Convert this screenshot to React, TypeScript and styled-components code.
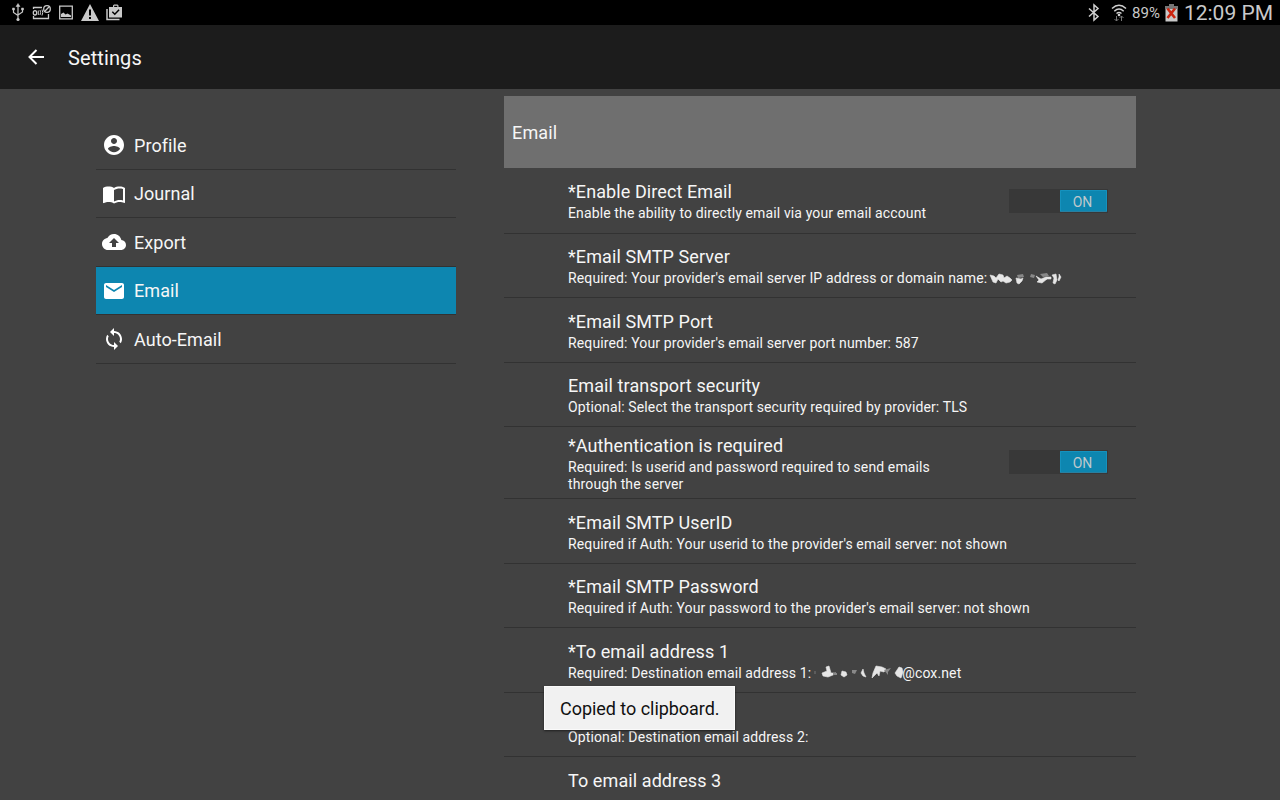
import React from 'react';
import styled, { createGlobalStyle } from 'styled-components';

const GlobalStyle = createGlobalStyle`
  * { box-sizing: border-box; }
  body { margin: 0; background: #424242; overflow: hidden; font-family: Roboto, sans-serif; color: #f6f6f6; }
  svg { display: block; flex: none; overflow: visible; }
`;

const Screen = styled.div`
  width: 1280px;
  height: 800px;
  overflow: hidden;
  position: relative;
  display: flex;
  flex-direction: column;
`;

const StatusBar = styled.header`
  height: 25px;
  flex: none;
  background: #000;
  color: #c9c9c9;
  display: flex;
  align-items: center;
  justify-content: space-between;
  padding: 0 7px 0 11px;
`;

const StatusIcons = styled.div`
  display: flex;
  align-items: center;
`;

const StatusIcon = styled.div<{ $left: number }>`
  margin-left: ${p => p.$left}px;
`;

const StatusText = styled.span<{ $size: number; $left: number }>`
  font-size: ${p => p.$size}px;
  line-height: 26px;
  padding-top: 1px;
  margin-left: ${p => p.$left}px;
`;

const ActionBar = styled.div`
  height: 64px;
  flex: none;
  background: #1c1c1c;
  display: flex;
  align-items: center;
  padding-left: 28px;
  gap: 24px;
`;

const Heading = styled.h1`
  margin: 0;
  padding-top: 2px;
  font-size: 20px;
  font-weight: 400;
  line-height: 24px;
  letter-spacing: 0.1px;
`;

const Body = styled.main`
  flex: 1;
  min-height: 0;
  display: flex;
  align-items: flex-start;
  gap: 48px;
  padding-left: 96px;
`;

const Nav = styled.nav`
  width: 360px;
  padding-top: 32px;
`;

const NavItem = styled.div<{ $active?: boolean }>`
  height: 48.5px;
  display: flex;
  align-items: center;
  gap: 8px;
  padding: 1px 0 0 6px;
  font-size: 18px;
  letter-spacing: 0.06px;
  background: ${p => (p.$active ? '#0d86b0' : 'transparent')};
  border-bottom: 1px solid #323232;
`;

const Panel = styled.section`
  width: 632px;
  padding-top: 7px;
`;

const PanelTitle = styled.h2`
  margin: 0;
  height: 72px;
  background: #6f6f6f;
  padding: 1px 8px 0;
  font-size: 18px;
  font-weight: 400;
  letter-spacing: 0.15px;
  line-height: 72px;
`;

const Row = styled.div<{ $height?: number }>`
  height: ${p => p.$height ?? 64.5}px;
  display: flex;
  align-items: center;
  justify-content: space-between;
  padding: 0 28px 0 64px;
  border-bottom: 1px solid #323232;
`;

const RowTitle = styled.div`
  height: 26px;
  font-size: 18px;
  line-height: 26px;
  letter-spacing: 0.09px;
  white-space: nowrap;
`;

const Summary = styled.div`
  min-height: 16.4px;
  font-size: 14px;
  line-height: 16.4px;
  letter-spacing: 0.125px;
  white-space: pre;
  display: flex;
`;

const Track = styled.div<{ $raised?: boolean }>`
  width: 99px;
  height: 24px;
  margin-bottom: ${p => (p.$raised ? 2 : 0)}px;
  background: #383838;
  display: flex;
  justify-content: flex-end;
  padding: 1px;
`;

const Thumb = styled.div`
  width: 47px;
  height: 22px;
  background: #0d86b0;
  border: 1px solid #1592be;
  border-bottom-color: #2a7fa0;
  border-radius: 1px;
  color: #bfc8cc;
  font-size: 14px;
  line-height: 22px;
  padding-right: 2px;
  text-align: center;
`;

const Toast = styled.div`
  position: absolute;
  left: 544px;
  top: 686px;
  width: 191px;
  height: 44px;
  background: #f1f1f1;
  border: 1px solid #fafafa;
  box-shadow: 0 1px 2px #202020;
  color: #111;
  font-size: 18px;
  letter-spacing: -0.04px;
  line-height: 43px;
  padding-left: 15px;
`;

const navPaths = {
  profile: 'M12 2C6.48 2 2 6.48 2 12s4.480 10 10 10 10-4.480 10-10S17.520 2 12 2zm0 3c1.660 0 3 1.340 3 3s-1.340 3-3 3-3-1.340-3-3 1.340-3 3-3zm0 14.200c-2.500 0-4.710-1.280-6-3.220.030-1.990 4-3.080 6-3.080 1.990 0 5.970 1.090 6 3.080-1.290 1.940-3.500 3.220-6 3.220z',
  journal: 'M21 5c-1.110-.350-2.330-.500-3.500-.500-1.950 0-4.050.400-5.500 1.500-1.450-1.100-3.550-1.500-5.500-1.500S2.450 4.900 1 6v14.650c0 .250.250.500.500.500.100 0 .150-.050.250-.050C3.100 20.450 5.050 20 6.500 20c1.950 0 4.050.400 5.500 1.500 1.350-.850 3.800-1.500 5.500-1.500 1.650 0 3.350.300 4.750 1.050.100.050.150.050.250.050.250 0 .500-.250.500-.500V6c-.600-.450-1.250-.750-2-1zm0 13.500c-1.100-.350-2.300-.500-3.500-.500-1.700 0-4.150.650-5.500 1.500V8c1.350-.850 3.800-1.500 5.500-1.500 1.200 0 2.400.150 3.500.500v11.500z',
  export: 'M19.350 10.040C18.670 6.590 15.640 4 12 4 9.110 4 6.600 5.640 5.350 8.040 2.340 8.360 0 10.910 0 14c0 3.310 2.690 6 6 6h13c2.760 0 5-2.240 5-5 0-2.640-2.050-4.780-4.650-4.960zM14 13v4h-4v-4H7l5-5 5 5h-3z',
  email: 'M20 4H4c-1.100 0-1.990.900-1.990 2L2 18c0 1.100.900 2 2 2h16c1.100 0 2-.900 2-2V6c0-1.100-.900-2-2-2zm0 4l-8 5-8-5V6l8 5 8-5v2z',
  auto: 'M12 4V1L8 5l4 4V6c3.310 0 6 2.690 6 6 0 1.010-.250 1.970-.700 2.800l1.460 1.460C19.540 15.030 20 13.570 20 12c0-4.420-3.580-8-8-8zm0 14c-3.310 0-6-2.690-6-6 0-1.010.250-1.970.700-2.800L5.240 7.740C4.460 8.970 4 10.430 4 12c0 4.420 3.580 8 8 8v3l4-4-4-4v3z',
};

const NavIcon = ({ name }: { name: keyof typeof navPaths }) => (
  <svg width="24" height="24" viewBox="0 0 24 24" fill="#fff"><path d={navPaths[name]} /></svg>
);

const NoticeIcons = () => (
  <svg width="112" height="25" viewBox="11 0 112 25" fill="none" stroke="#c9c9c9">
    <g strokeWidth="1.200">
      <path d="M18 5v14M13.500 9v3.500l4.500 3M22.500 9v3l-4.500 3" />
      <path d="M18 3.500l-2 3h4zM12.500 8h2v2h-2zM21.500 8h2v2h-2z" fill="#c9c9c9" strokeWidth=".5" />
      <circle cx="18" cy="19.500" r="1.600" fill="#c9c9c9" stroke="none" />
    </g>
    <g strokeWidth="1.300">
      <path d="M33.500 9V7.500H42M33.500 16v2.500h15V14" />
      <ellipse cx="35" cy="12.800" rx="1.700" ry="2.200" />
      <path d="M38.300 10.500v4.500M40 10q1.200 2.500 0 5M42 9.500q1.500 3 0 6" strokeWidth="1" />
      <circle cx="47" cy="9" r="3.300" /><path d="M44.800 11.300l4.400-4.600" />
    </g>
    <path d="M59.700 6.200h12.600v12.600H59.700z" strokeWidth="1.300" />
    <path d="M61 17v-3l2.500-1.500 2 2 2-1 3.500 2V17z" fill="#c9c9c9" stroke="none" />
    <path fill="#c9c9c9" stroke="none" fillRule="evenodd" d="M90 4l9 17H81zM89 9.500v6h2v-6zM89 17v2h2v-2z" />
    <path d="M107 9v10.500h12.500" strokeWidth="1.500" />
    <path fill="#c9c9c9" stroke="none" fillRule="evenodd" d="M109 7h4V5.500l1-1h3.500l1 1V7h3.500v10.500h-13zM114.200 5.700V7h3.100V5.700z" />
    <path d="M112.300 11.800l2.500 2.500 4.300-4.500" stroke="#000" strokeWidth="1.500" />
  </svg>
);

const Bluetooth = () => (
  <svg width="12" height="17" viewBox="0 0 12 17" fill="none" stroke="#d0d0d0" strokeWidth="1.500">
    <path d="M1 4.500l9 8L6 16V1l4 3.500-9 8" />
  </svg>
);

const Wifi = () => (
  <svg width="16" height="18" viewBox="0 0 16 18" fill="none" stroke="#d0d0d0" strokeWidth="1.500">
    <path d="M1 4.500q7-6.500 14 0M3.300 7.200q4.700-4.300 9.400 0M5.500 9.500q2.500-2 5 0" />
    <circle cx="8" cy="11" r="1.300" fill="#d0d0d0" stroke="none" />
    <path stroke="#777" strokeWidth="1" d="M5.500 12v5M3.500 15l2 2 2-2M10.500 17v-5M8.500 14l2-2 2 2" />
  </svg>
);

const Battery = () => (
  <svg width="13" height="18" viewBox="0 0 13 18">
    <path fill="#777" d="M4 0h5v2h4v3H0V2h4z" />
    <path fill="#c9c9c9" d="M.5 5h12v12.500H.5z" />
    <path stroke="#cc2510" strokeWidth="2.600" d="M2.500 4.500l7.500 9.500M10 4.500l-7.500 9.500" />
  </svg>
);

const ServerScribble = () => (
  <svg width="76" height="16" viewBox="987 271 76 16" fill="#e6e6e6" stroke="#e6e6e6" strokeWidth=".6" strokeLinejoin="round">
    <path d="M990 276l4 1 2 2 3-4 4 1 1 3 3-2 3 2 2 2-2 2-4 1-3-2-2 1-3-3-2 4-3-1z" />
    <path fill="#888" stroke="none" d="M1017 276l6-1 1 3-6 1zM1031 275l4 1-1 3-4-1zM1040 275l7-1 2 3-6 1z" />
    <path d="M1016 279l5 1 2-1-1 3-3 3-2-1zM1036 277l5 3 5-2 1 2-5 4-5-1 2-2zM1046 278h5v2h-5zM1052 276l4-1 1 6-2 4-2-1 1-5zM1059 275l2 3-2 4-1-1 1-3z" />
  </svg>
);

const AddressScribble = () => (
  <svg width="91" height="16" viewBox="811 665 91 16" fill="#e6e6e6" stroke="#e6e6e6" strokeWidth=".6" strokeLinejoin="round">
    <path d="M829 666l-3 1 1 4-5 2 1 3 5 1 5-2 3-2-5 0zM842 671l4 1 1 3-3 2-3-2zM863 669l1 4 2 4-3-1-2-3zM876 666l6 1 4 2-2 3-4-1-1 5-2-3-5 5 1-5zM899 667l3 1 1 4-2 6-4-2-2-3z" />
    <path fill="#888" stroke="none" d="M833 673h4v2h-4zM852 670h5l-2 4-3-1zM884 670l7-2-3 4 0 3z" />
    <path fill="#5c5c5c" stroke="none" d="M814 671h2v3h-2z" />
  </svg>
);

const Switch = ({ raised }: { raised?: boolean }) => <Track $raised={raised}><Thumb>ON</Thumb></Track>;

const nav: [keyof typeof navPaths, string][] = [
  ['profile', 'Profile'], ['journal', 'Journal'], ['export', 'Export'], ['email', 'Email'], ['auto', 'Auto-Email'],
];

type Setting = { title?: string; text?: React.ReactNode; toggle?: boolean; height?: number };
const settings: Setting[] = [
  { title: '*Enable Direct Email', text: 'Enable the ability to directly email via your email account', toggle: true, height: 66 },
  { title: '*Email SMTP Server', text: <>Required: Your provider's email server IP address or domain name:<ServerScribble /></>, height: 64 },
  { title: '*Email SMTP Port', text: "Required: Your provider's email server port number: 587" },
  { title: 'Email transport security', text: 'Optional: Select the transport security required by provider: TLS' },
  { title: '*Authentication is required', text: 'Required: Is userid and password required to send emails\nthrough the server', toggle: true, height: 72 },
  { title: '*Email SMTP UserID', text: "Required if Auth: Your userid to the provider's email server: not shown" },
  { title: '*Email SMTP Password', text: "Required if Auth: Your password to the provider's email server: not shown" },
  { title: '*To email address 1', text: <>Required: Destination email address 1:<AddressScribble />@cox.net</> },
  { text: 'Optional: Destination email address 2:' },
  { title: 'To email address 3' },
];

export default function App() {
  return (
    <Screen>
      <GlobalStyle />
      <StatusBar>
        <NoticeIcons />
        <StatusIcons>
          <Bluetooth />
          <StatusIcon $left={11}><Wifi /></StatusIcon>
          <StatusText $size={15} $left={5}>89%</StatusText>
          <StatusIcon $left={5}><Battery /></StatusIcon>
          <StatusText $size={21} $left={6}>12:09 PM</StatusText>
        </StatusIcons>
      </StatusBar>
      <ActionBar>
        <svg width="16" height="16" viewBox="0 0 16 16" fill="none" stroke="#fff" strokeWidth="2">
          <path d="M16 8H2M8.500 1L1.500 8l7 7" />
        </svg>
        <Heading>Settings</Heading>
      </ActionBar>
      <Body>
        <Nav>
          {nav.map(([icon, label]) => (
            <NavItem key={icon} $active={icon === 'email'}><NavIcon name={icon} />{label}</NavItem>
          ))}
        </Nav>
        <Panel>
          <PanelTitle>Email</PanelTitle>
          {settings.map((s, i) => (
            <Row key={i} $height={s.height}>
              <div><RowTitle>{s.title}</RowTitle><Summary>{s.text}</Summary></div>
              {s.toggle && <Switch raised={i > 0} />}
            </Row>
          ))}
        </Panel>
      </Body>
      <Toast>Copied to clipboard.</Toast>
    </Screen>
  );
}
